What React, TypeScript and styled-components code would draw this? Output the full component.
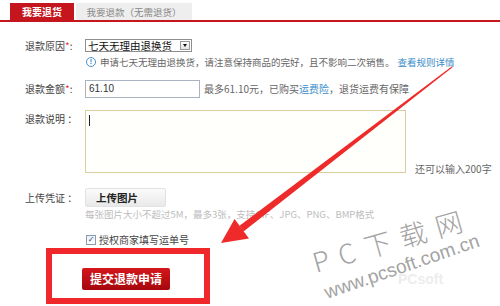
import React from "react";
import styled, { createGlobalStyle } from "styled-components";

const Global = createGlobalStyle`
  html, body { margin: 0; padding: 0; background: #fff; }
  body { font-family: "Noto Sans CJK SC", "Noto Sans", sans-serif; }
`;

const Page = styled.div`
  position: relative;
  width: 500px;
  height: 306px;
  overflow: hidden;
  background: #fff;
  color: #444;
  font-size: 10px;
  line-height: 12px;
`;

const TabBar = styled.div`
  display: flex;
  gap: 2px;
  padding: 3px 0 0 10px;
  border-bottom: 2px solid #c4161c;
`;

const Tab = styled.div<{ $active?: boolean }>`
  height: 17px;
  display: flex;
  align-items: center;
  justify-content: center;
  padding: 0 ${(p) => (p.$active ? "12px" : "11px")};
  width: ${(p) => (p.$active ? "40px" : "94px")};
  background: ${(p) => (p.$active ? "#c4161c" : "#eeeeee")};
  color: ${(p) => (p.$active ? "#fff" : "#888")};
  font-weight: ${(p) => (p.$active ? 700 : 400)};
  font-size: ${(p) => (p.$active ? "10px" : "9.5px")};
  white-space: nowrap;
`;

const Form = styled.div`
  display: flex;
  flex-direction: column;
  align-items: flex-start;
  padding: 17px 0 0 25px;
`;

const Row = styled.div<{ $mt?: number; $align?: string }>`
  display: flex;
  align-items: ${(p) => p.$align || "center"};
  margin-top: ${(p) => p.$mt || 0}px;
`;

const Label = styled.div<{ $pt?: number; $top?: boolean }>`
  width: 60px;
  flex: none;
  color: #444;
  white-space: nowrap;
  align-self: ${(p) => (p.$top ? "flex-start" : "auto")};
  padding-top: ${(p) => p.$pt || 0}px;
`;

const Star = styled.span`
  color: #e4393c;
`;

const Select = styled.div`
  width: 103px;
  height: 11px;
  border: 1px solid #8e8e8e;
  display: flex;
  align-items: center;
  justify-content: space-between;
  padding-left: 2px;
  font-size: 10.5px;
  color: #111;
  background: #fff;
`;

const DropButton = styled.div`
  width: 8px;
  height: 7px;
  margin-right: 1px;
  border: 1px solid #9a9a9a;
  background: linear-gradient(#fdfdfd, #e4e4e4);
  display: flex;
  align-items: center;
  justify-content: center;
  &::after {
    content: "";
    border-left: 2.5px solid transparent;
    border-right: 2.5px solid transparent;
    border-top: 3px solid #111;
  }
`;

const InfoLine = styled.div`
  display: flex;
  align-items: center;
  gap: 4px;
  margin: 4px 0 0 61px;
  color: #666;
  font-size: 9.5px;
  white-space: nowrap;
`;

const InfoIcon = styled.span`
  width: 8px;
  height: 8px;
  border: 1px solid #4a8fd0;
  border-radius: 50%;
  color: #3a7fc4;
  font-size: 7px;
  line-height: 8px;
  font-weight: 700;
  text-align: center;
  font-family: "Liberation Sans", sans-serif;
`;

const Link = styled.span`
  color: #3a8cc9;
  margin-left: 3px;
`;

const InlineLink = styled.span`
  color: #3a8cc9;
`;

const AmountInput = styled.div`
  width: 110px;
  height: 16px;
  border: 1px solid #a9b4c2;
  display: flex;
  align-items: center;
  padding-left: 3px;
  font-family: "Liberation Sans", sans-serif;
  font-size: 10px;
  color: #333;
`;

const Note = styled.span`
  margin-left: 4px;
  color: #666;
  white-space: nowrap;
`;

const TextArea = styled.div`
  width: 319px;
  height: 61px;
  border: 1px solid #dccd9c;
  background: #fffffb;
`;

const Caret = styled.div`
  width: 1px;
  height: 11px;
  background: #222;
  margin: 4px 0 0 3px;
`;

const Counter = styled.span`
  color: #666;
  margin-left: 9px;
  margin-bottom: -2px;
  white-space: nowrap;
`;

const UploadButton = styled.div`
  width: 69px;
  height: 17px;
  padding-left: 10px;
  border: 1px solid #e2e2e2;
  border-radius: 2px;
  background: linear-gradient(#fbfbfb, #e9e9e9);
  display: flex;
  align-items: center;
  font-weight: 700;
  font-size: 10.5px;
  color: #222;
`;

const Hint = styled.div`
  margin: 1px 0 0 60px;
  color: #bdbdbd;
  font-size: 9.5px;
  white-space: nowrap;
`;

const CheckRow = styled.label`
  display: flex;
  align-items: center;
  gap: 3px;
  margin: 14px 0 0 61px;
  color: #444;
`;

const CheckBox = styled.span`
  width: 8px;
  height: 8px;
  border: 1px solid #8b9bb3;
  background: linear-gradient(#e9eef5, #fff);
  color: #2c4a78;
  font-size: 8px;
  line-height: 8px;
  text-align: center;
  font-family: "DejaVu Sans", sans-serif;
`;

const Highlight = styled.div`
  margin: 2px 0 0 21px;
  width: 122px;
  height: 30px;
  border: 6px solid #f0282b;
  padding: 14px 0 0 30px;
  box-sizing: content-box;
`;

const SubmitButton = styled.div`
  width: 88px;
  height: 22px;
  border-radius: 2px;
  background: linear-gradient(#d3161c, #a5080d);
  color: #fff;
  font-weight: 700;
  font-size: 12px;
  display: flex;
  align-items: center;
  justify-content: center;
`;

const Overlay = styled.svg`
  position: absolute;
  left: 0;
  top: 0;
  pointer-events: none;
`;

export default function App() {
  const tip = [221, 243];
  return (
    <Page>
      <Global />
      <TabBar>
        <Tab $active>我要退货</Tab>
        <Tab>我要退款（无需退货）</Tab>
      </TabBar>
      <Form>
        <Row>
          <Label>
            退款原因<Star>*</Star>:
          </Label>
          <Select>
            七天无理由退换货
            <DropButton />
          </Select>
        </Row>
        <InfoLine>
          <InfoIcon>!</InfoIcon>
          <span>
            申请七天无理由退换货，请注意保持商品的完好，且不影响二次销售。
            <Link>查看规则详情</Link>
          </span>
        </InfoLine>
        <Row $mt={12}>
          <Label>
            退款金额<Star>*</Star>:
          </Label>
          <AmountInput>61.10</AmountInput>
          <Note>
            最多61.10元，已购买<InlineLink>运费险</InlineLink>，退货运费有保障
          </Note>
        </Row>
        <Row $mt={12} $align="flex-end">
          <Label $top $pt={3}>
            退款说明 ：
          </Label>
          <TextArea>
            <Caret />
          </TextArea>
          <Counter>还可以输入200字</Counter>
        </Row>
        <Row $mt={15}>
          <Label>上传凭证 ：</Label>
          <UploadButton>上传图片</UploadButton>
        </Row>
        <Hint>每张图片大小不超过5M，最多3张，支持GIF、JPG、PNG、BMP格式</Hint>
        <CheckRow>
          <CheckBox>✓</CheckBox>
          授权商家填写运单号
        </CheckRow>
        <Highlight>
          <SubmitButton>提交退款申请</SubmitButton>
        </Highlight>
      </Form>
      <Overlay width="500" height="306" viewBox="0 0 500 306">
        <text
          x="316"
          y="273"
          fontSize="27"
          fontWeight="300"
          fill="#a3a3a3"
          fontFamily="'Noto Sans CJK SC', sans-serif"
          transform="rotate(-16 316 273)"
          letterSpacing="10"
        >
          PC下载网
        </text>
        <text
          x="327"
          y="299"
          fontSize="19"
          fill="#a3a3a3"
          fontFamily="'Liberation Sans', sans-serif"
          transform="rotate(-19 327 299)"
        >
          www.pcsoft.com.cn
        </text>
        <text x="398" y="284" fontSize="14" fill="#ededed" fontWeight="700" fontFamily="'Liberation Sans', sans-serif">
          PCsoft
        </text>
        <polygon points="452.3,67.4 451.7,66.6 239.5,225.8 243.5,231.6" fill="#ee2a2a" />
        <polygon points={`${tip[0]},${tip[1]} 249,238.5 234.6,218.9`} fill="#ee2a2a" />
      </Overlay>
    </Page>
  );
}
